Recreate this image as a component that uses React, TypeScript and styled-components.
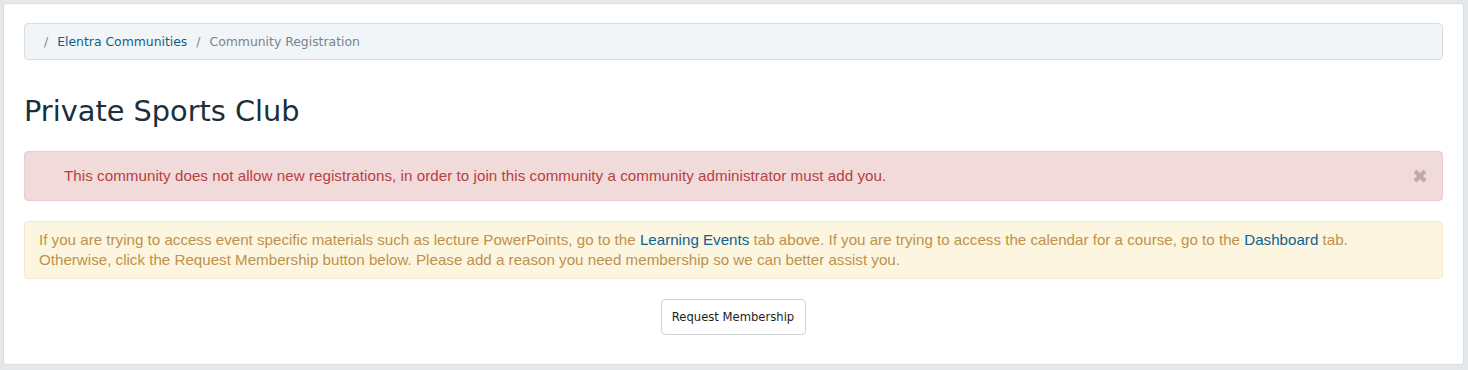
import React from "react";
import styled, { createGlobalStyle } from "styled-components";

const GlobalStyle = createGlobalStyle`
  html, body {
    margin: 0;
    padding: 0;
    background: #e4e8eb;
  }
  body {
    font-family: "Liberation Sans", Arial, sans-serif;
  }
`;

const Page = styled.div`
  padding: 3px 4px 5px 3px;
  box-sizing: border-box;
  width: 1468px;
  height: 370px;
`;

const Card = styled.div`
  background: #ffffff;
  border: 1px solid #d9dee3;
  border-radius: 3px;
  box-sizing: border-box;
  height: 362px;
  padding: 19px 20px 0 20px;
  display: flex;
  flex-direction: column;
`;

const Breadcrumb = styled.nav`
  background: #f1f5f8;
  border: 1px solid #d6dde3;
  border-radius: 4px;
  height: 37px;
  box-sizing: border-box;
  display: flex;
  align-items: center;
  padding: 0 0 0 19px;
  gap: 9px;
  font-family: "DejaVu Sans", "Liberation Sans", sans-serif;
  font-size: 12.4px;
  color: #74828d;
`;

const Sep = styled.span`
  color: #7d8992;
`;

const CrumbLink = styled.a`
  color: #115e8c;
  text-decoration: none;
`;

const Crumb = styled.span`
  color: #76848e;
`;

const Title = styled.h1`
  margin: 33px 0 0 0;
  font-family: "DejaVu Sans", "Liberation Sans", sans-serif;
  font-weight: 400;
  font-size: 28.8px;
  line-height: 36px;
  color: #1b2f3b;
`;

const Alert = styled.div<{ $tone: "danger" | "warning" }>`
  box-sizing: border-box;
  border-radius: 4px;
  border: 1px solid ${(p) => (p.$tone === "danger" ? "#ecccd0" : "#f8e8c7")};
  background: ${(p) => (p.$tone === "danger" ? "#f1dada" : "#fcf6e0")};
  color: ${(p) => (p.$tone === "danger" ? "#b7413f" : "#bf914b")};
  font-family: "Liberation Sans", Arial, sans-serif;
  font-size: 15.15px;
  line-height: 20px;
`;

const DangerAlert = styled(Alert)`
  margin-top: 22px;
  height: 50px;
  display: flex;
  align-items: center;
  padding: 0 14px 0 39px;
`;

const AlertText = styled.span`
  flex: 1;
  letter-spacing: 0.05px;
`;

const Close = styled.span`
  color: #c4a7a8;
  font-size: 19px;
  line-height: 20px;
  font-family: "DejaVu Sans", sans-serif;
`;

const WarningAlert = styled(Alert)`
  margin-top: 20px;
  padding: 8px 14px 8px 14px;
`;

const InlineLink = styled.a`
  color: #0e6193;
  text-decoration: none;
`;

const ButtonRow = styled.div`
  display: flex;
  justify-content: center;
  margin-top: 20px;
`;

const Button = styled.button`
  height: 36px;
  width: 145px;
  box-sizing: border-box;
  background: #ffffff;
  border: 1px solid #cfd3d6;
  border-radius: 4px;
  font-family: "DejaVu Sans", "Liberation Sans", sans-serif;
  font-size: 11.6px;
  color: #1e1e1e;
  padding: 0;
  margin-left: -1px;
`;

export default function App() {
  return (
    <>
      <GlobalStyle />
      <Page>
        <Card>
          <Breadcrumb>
            <Sep>/</Sep>
            <CrumbLink href="#">Elentra Communities</CrumbLink>
            <Sep>/</Sep>
            <Crumb>Community Registration</Crumb>
          </Breadcrumb>
          <Title>Private Sports Club</Title>
          <DangerAlert $tone="danger">
            <AlertText>
              This community does not allow new registrations, in order to join this community a community administrator must add you.
            </AlertText>
            <Close>✖</Close>
          </DangerAlert>
          <WarningAlert $tone="warning">
            If you are trying to access event specific materials such as lecture PowerPoints, go to the{" "}
            <InlineLink href="#">Learning Events</InlineLink> tab above. If you are trying to access the calendar for a course, go to the{" "}
            <InlineLink href="#">Dashboard</InlineLink> tab.
            <br />
            Otherwise, click the Request Membership button below. Please add a reason you need membership so we can better assist you.
          </WarningAlert>
          <ButtonRow>
            <Button>Request Membership</Button>
          </ButtonRow>
        </Card>
      </Page>
    </>
  );
}
